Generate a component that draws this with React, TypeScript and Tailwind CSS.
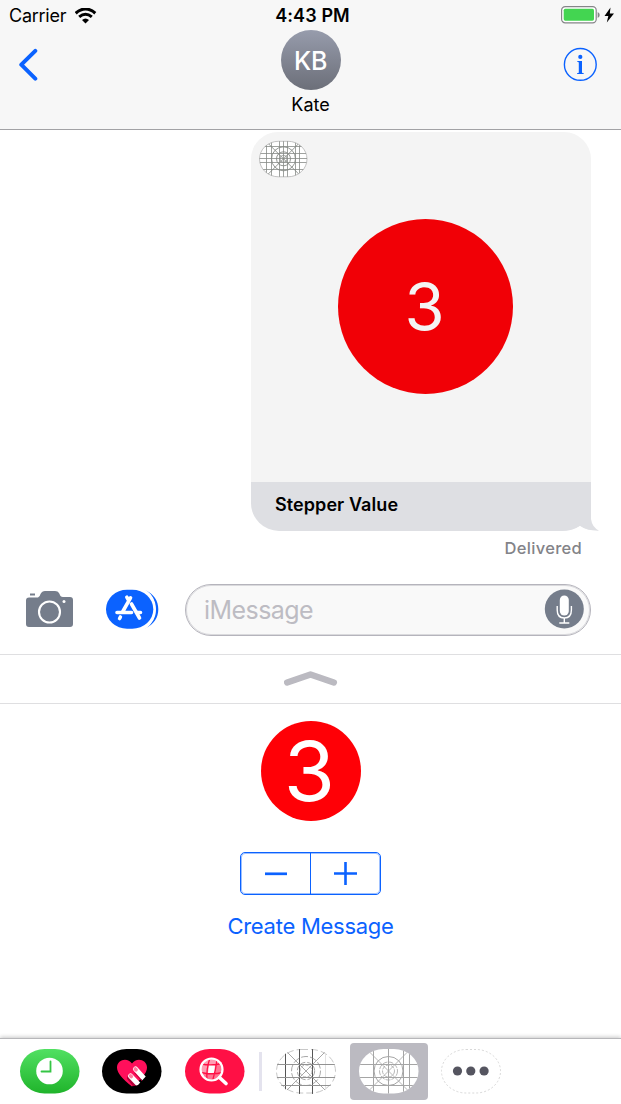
import React from "react";

function StatusBar() {
  return (
    <div className="flex h-[30px] items-center justify-between pt-[2px] pr-[6px] pl-[9px] text-[18px] leading-none">
      <div className="flex w-[241px] items-center gap-[8px]">
        <span className="w-[58px] tracking-[-0.25px] whitespace-nowrap">Carrier</span>
        <svg className="mb-[1px]" width="22" height="16" viewBox="0 0 22 16">
          <path d="M.7 5.200Q10.500-3.200 20.300 5.200" fill="none" stroke="#000" strokeWidth="3.100" />
          <path d="M4.200 8.900Q10.500 3.600 16.800 8.900" fill="none" stroke="#000" strokeWidth="3" />
          <path d="M7 12Q10.500 9 14 12L10.500 15.600Z" />
        </svg>
      </div>
      <span className="font-semibold tracking-[0.1px] whitespace-nowrap">4:43 PM</span>
      <div className="flex w-[240px] items-center justify-end">
        <svg className="mb-[2px]" width="54" height="18" viewBox="0 0 54 18">
          <rect x="0.6" y="0.6" width="34.6" height="16.2" rx="3.6" fill="#fff" stroke="#858588" strokeWidth="1.2" />
          <rect x="2.7" y="2.7" width="30.3" height="12" rx="1.6" fill="#43d551" />
          <path d="M36.7 6v6q2-1 2-3t-2-3" fill="#858588" />
          <path d="M49.5 1.5L43.5 10h3.8L45.8 16.5 53 7.4h-4.2z" />
        </svg>
      </div>
    </div>
  );
}

function Header() {
  return (
    <header className="h-[130px] shrink-0 border-b border-[#a2a2a5] bg-[#f7f7f7]">
      <StatusBar />
      <div className="flex justify-between">
        <button className="mt-[18px] ml-[18px] h-[34px] w-[60px]">
          <svg width="22" height="34" viewBox="0 0 22 34">
            <path d="M17.300 2.800L3.300 16.700 17.300 30.700" fill="none" stroke="#0b62ff" strokeWidth="4" strokeLinecap="round" strokeLinejoin="round" />
          </svg>
        </button>
        <div className="flex flex-col items-center pl-[1px]">
          <div className="flex size-[60px] items-center justify-center rounded-full bg-linear-to-b from-[#979cac] to-[#6c6f79] pt-[3px] text-[25px] font-medium tracking-[-0.4px] text-white">KB</div>
          <span className="mt-[5px] text-[18px] leading-[19px]">Kate</span>
        </div>
        <button className="mt-[17px] mr-[24px] flex h-[34px] w-[55px] justify-end">
          <svg width="34" height="34" viewBox="0 0 34 34">
            <circle cx="17.300" cy="17.400" r="15.900" fill="none" stroke="#0b62ff" strokeWidth="1.400" />
            <circle cx="17.300" cy="9.900" r="2.100" fill="#0b62ff" />
            <path d="M14.200 14h4.800v11.500q0 .5 1.800.8v.7h-6.800v-.7q1.800-.3 1.800-.8v-9.700q0-.8-1.600-1z" fill="#0b62ff" />
          </svg>
        </button>
      </div>
    </header>
  );
}

function BubbleIcon() {
  return (
    <svg width="49" height="38" viewBox="0 -0.8 49 38" fill="none" stroke="#868a86" strokeWidth="0.9">
      <clipPath id="bubbleIconClip"><rect x="0.5" y="0.5" width="47.500" height="35.500" rx="19" ry="17.700" /></clipPath>
      <rect x="0.5" y="0.5" width="47.500" height="35.500" rx="19" ry="17.700" fill="#fff" stroke="#bbb" />
      <g clipPath="url(#bubbleIconClip)">
        <path d="M7.500 0v37M12.500 0v37M20.500 0v37M24.500 0v37M28.500 0v37M36.500 0v37M40.500 0v37M0 5.700h49M0 12.700h49M0 17.700h49M0 21.700h49M0 28.700h49" strokeWidth="0.8" />
        <path d="M6.500 0l36 36M42.500 0l-36 36" />
        <circle cx="24.500" cy="18" r="3.500" strokeWidth="0.7" />
        <circle cx="24.500" cy="18" r="7" />
        <circle cx="24.500" cy="18" r="12" />
      </g>
    </svg>
  );
}

function MessageBubble() {
  return (
    <div className="relative ml-[251px] flex h-[399px] w-[340px] flex-col overflow-visible">
      <div className="h-[350px] rounded-t-[27px] bg-[#f4f4f4] pt-[8px] pl-[8px]">
        <BubbleIcon />
        <div className="mt-[41px] ml-[79px] flex size-[175px] items-center justify-center rounded-full bg-[#f10006] pt-[1px] pr-[2px] text-[65px] font-normal text-[#f4f4f4]">3</div>
      </div>
      <div className="flex h-[49px] items-center rounded-bl-[28px] bg-[#dedfe3] pb-[4px] pl-[24px] text-[18px] font-semibold tracking-[0.08px]">Stepper Value</div>
      <svg className="absolute right-[-10px] bottom-0" width="45" height="20" viewBox="0 0 45 20">
        <path d="M0 20Q15 20 24 14.8 31 19.5 45 20V0H35V20z" fill="#fff" />
        <path d="M0 20V0H35V8Q36 16 43 19.7 31 20 24 14.8 17 20 5 20z" fill="#dedfe3" />
      </svg>
    </div>
  );
}

function ComposeRow() {
  return (
    <div className="flex h-[52px] items-center">
      <svg className="mb-[2px] ml-[26px]" width="48" height="38" viewBox="0 0 48 38">
        <path d="M3 7.500H12Q14 6.500 14.500 4 16 1 19 1h10q3 0 4 2l1.500 3q1 1 2.500 1h7q3 0 3 3v24q0 3-3 3H3q-3 0-3-3V10.500q0-3 3-3z" fill="#757d8b" />
        <path d="M4 4.500h5" stroke="#757d8b" strokeWidth="2" />
        <circle cx="23.500" cy="22" r="10.500" fill="none" stroke="#fff" strokeWidth="2.100" />
        <circle cx="38" cy="11.500" r="1.500" fill="#fff" />
      </svg>
      <svg className="mb-[2px] ml-[32px]" width="53" height="40" viewBox="0 0 53 40">
        <rect x="0" y="0.700" width="47.300" height="39" rx="21" ry="19.500" fill="#0b62ff" />
        <path d="M39 1C48 5 52.300 12 52.300 20.300S48 35.500 39 39.500C46 34.500 49.700 28 49.700 20.300S46 6 39 1z" fill="#0b62ff" />
        <path d="M39.200 1.400C46.500 6.500 49.200 12.500 49.200 20.300S46.500 34 39.200 39" fill="none" stroke="#fff" strokeWidth="1.600" />
        <g fill="none" stroke="#fff" strokeWidth="3.600" strokeLinecap="round">
          <path d="M24.500 8.800L16.500 23M20.800 8.200l1.800 3.200M25.500 15l8 14M11 23.500h14.500M31.500 23.500h3M14.400 28l-.8 1.500" />
        </g>
      </svg>
      <div className="ml-[26px] flex h-[52px] w-[406px] items-center justify-between rounded-full border border-[#b5b4bc] bg-[#f9f9f9] pr-[6px] pl-[18px] outline outline-offset-[-2px] outline-[#bcbbc2]/50">
        <span className="pt-[2px] text-[25px] tracking-[-0.55px] text-[#bdbcc3]">iMessage</span>
        <svg className="mb-[2px]" width="40" height="40" viewBox="0 0 40 40">
          <circle cx="20.300" cy="20" r="19.500" fill="#757d8b" />
          <rect x="15.800" y="6.500" width="9" height="20" rx="4.500" fill="#fff" />
          <path d="M13.200 17v4q0 8 7.100 8t7.100-8V17M20.300 29v5M15.300 34h10" fill="none" stroke="#fff" strokeWidth="1.400" />
        </svg>
      </div>
    </div>
  );
}

function StepperPanel() {
  return (
    <div className="flex h-[334px] flex-col items-center pt-[17px]">
      <div className="flex size-[100px] items-center justify-center rounded-full bg-[#ff0006] pt-[1px] pr-[2px] text-[83px] leading-none font-normal text-white">3</div>
      <div className="mt-[31px] flex h-[43px] w-[141px] rounded-[5px] border border-[#0b62ff] outline outline-offset-[-2px] outline-[#0b62ff]/40">
        <button className="flex flex-1 items-center justify-center border-r border-[#0b62ff]">
          <svg width="24" height="24" viewBox="0 0 24 24"><path d="M1 11.800h22" stroke="#0b62ff" strokeWidth="2.700" /></svg>
        </button>
        <button className="flex flex-1 items-center justify-center">
          <svg width="24" height="24" viewBox="0 0 24 24"><path d="M0 11.500h23M11.500 0v23" stroke="#0b62ff" strokeWidth="2.600" /></svg>
        </button>
      </div>
      <button className="mt-[18px] text-[22px] leading-[26px] tracking-[-0.27px] whitespace-nowrap text-[#0b62ff]">Create Message</button>
    </div>
  );
}

function RecentIcon() {
  return (
    <svg width="60" height="45" viewBox="0 0 60 45">
      <defs><linearGradient id="recentGreen" x1="0" y1="0" x2="0" y2="1"><stop stopColor="#51e062" /><stop offset="1" stopColor="#20b42b" /></linearGradient></defs>
      <rect width="59.500" height="44.500" rx="24.500" ry="22.250" fill="url(#recentGreen)" />
      <circle cx="29.500" cy="22" r="13.300" fill="#fff" />
      <path d="M30.500 12.500v10H21.500" fill="none" stroke="#35c545" strokeWidth="1.800" strokeLinecap="round" />
    </svg>
  );
}

function DigitalTouchIcon() {
  return (
    <svg width="60" height="45" viewBox="0 0 60 45">
      <clipPath id="heartClip"><path d="M30 37.500L15 22V6H46V25L36 36z" /></clipPath>
      <rect width="59.500" height="44.500" rx="24.500" ry="22.250" />
      <path d="M30 37.500Q15 26 15 18.500C15 10 26 8 30 14.500 34 8 45 10 45 18.500Q45 26 30 37.500z" fill="#ff0f5b" />
      <g clipPath="url(#heartClip)">
        <path d="M27.500 29l6 7" stroke="#b30037" strokeWidth="5" strokeLinecap="round" />
        <path d="M33.500 20L43 30.500M28.500 27L37 36" stroke="#fff" strokeWidth="5" strokeLinecap="round" />
        <path d="M32.500 23.800L40 32" stroke="#b30037" strokeWidth="1" />
        <path d="M33.300 20l.8.8M28.500 26.800l.8.8" stroke="#ff7d9f" strokeWidth="3.600" strokeLinecap="round" />
      </g>
    </svg>
  );
}

function ImagesIcon() {
  return (
    <svg width="60" height="45" viewBox="0 0 60 45">
      <rect width="59.500" height="44.500" rx="24.500" ry="22.250" fill="#ff1045" />
      <circle cx="26.500" cy="20.500" r="11" fill="#ff9db3" />
      <path d="M16 25h21q-3 7-10.500 7T16 25M31 15l6-2v12l-7-1z" fill="#ff7492" />
      <path d="M24 16h6l-1 8h-6z" fill="#fff" />
      <path d="M25 9Q21 20 22 32M32 10Q31 21 27.500 32M16 15Q27 17 37 14.500M16 23.500Q27 26 37.500 23.500" fill="none" stroke="#ff1045" strokeWidth="1.300" />
      <circle cx="26.500" cy="20.500" r="11" fill="none" stroke="#fff" strokeWidth="2.200" />
      <path d="M34.500 28.500l6.500 6" stroke="#fff" strokeWidth="3.600" strokeLinecap="round" />
    </svg>
  );
}

function GridIconA() {
  return (
    <svg width="60" height="45" viewBox="0 0 60 45" fill="none" stroke="#929292">
      <clipPath id="gridClipA"><rect width="60" height="45" rx="24.500" ry="22" /></clipPath>
      <rect x=".5" y=".5" width="59" height="43.500" rx="24.500" ry="21.700" fill="#fff" stroke="#c8c8c8" strokeDasharray="7 3" />
      <g clipPath="url(#gridClipA)">
        <path d="M9.500 0v45M23.500 0v45M36.500 0v45" stroke="#555" />
        <path d="M49.500 0v45" stroke="#e2e2e2" />
        <path d="M0 15.500h60M0 28.500h60M0 36.500h60" />
        <path d="M8 0l44 44M52 0L8 44" strokeWidth="0.8" />
        <circle cx="30" cy="22" r="6" strokeWidth="0.7" strokeDasharray="3 1.500" /><circle cx="30" cy="22" r="8.700" strokeWidth="0.8" strokeDasharray="5 2" />
        <circle cx="30" cy="22" r="14.500" strokeWidth="0.8" strokeDasharray="7 2" />
      </g>
    </svg>
  );
}

function GridIconB() {
  return (
    <svg width="60" height="45" viewBox="0 0 60 45" fill="none" stroke="#a5a5a5">
      <clipPath id="gridClipB"><rect width="59.500" height="44.500" rx="24.500" ry="22" /></clipPath>
      <rect width="59.500" height="44.500" rx="24.500" ry="22" fill="#fff" stroke="none" />
      <g clipPath="url(#gridClipB)">
        <path d="M14.500 0v45M29.500 0v45M44.500 0v45M50.500 0v45M0 15.500h60M0 28.500h60M0 36.500h60" />
        <path d="M7.500 0l44 44M51.500 0l-44 44" strokeWidth="0.8" />
        <circle cx="29.500" cy="22" r="6" strokeWidth="0.8" strokeDasharray="4 1" /><circle cx="29.500" cy="22" r="9" strokeWidth="0.8" strokeDasharray="5 1" />
        <circle cx="29.500" cy="22" r="14.500" />
      </g>
    </svg>
  );
}

function AppDrawer() {
  return (
    <div className="flex h-[66px] border-t border-[#b7b7ba] bg-white shadow-[0_-1px_4px_rgba(0,0,0,0.22)]">
      <div className="flex w-[259px] gap-[22.4px] pt-[10px] pl-[20px]"><RecentIcon /><DigitalTouchIcon /><ImagesIcon /></div>
      <div className="mt-[13px] h-[39px] w-[3px] bg-[#e4e3ee]" />
      <div className="mt-[10px] ml-[14px]"><GridIconA /></div>
      <div className="mt-[4px] ml-[14px] flex h-[57px] w-[78px] items-start justify-center rounded-[4px] bg-[#bbbac1] pt-[6px]"><GridIconB /></div>
      <svg className="mt-[10px] ml-[13px]" width="60" height="45" viewBox="0 0 60 45">
        <rect x=".5" y=".5" width="59" height="43.500" rx="24.500" ry="21.700" fill="none" stroke="#d8d8d8" strokeDasharray="2 2" />
        <g fill="#555560"><circle cx="16.500" cy="22" r="4.600" /><circle cx="29.800" cy="22" r="4.600" /><circle cx="43.100" cy="22" r="4.600" /></g>
      </svg>
    </div>
  );
}

export default function App() {
  return (
    <main className="flex h-[1104px] w-[621px] flex-col overflow-hidden bg-white font-['Inter','Liberation_Sans',sans-serif] text-black">
      <Header />
      <section className="flex h-[454px] flex-col pt-[2px]">
        <MessageBubble />
        <span className="mt-[7px] mr-[39px] self-end text-[16.5px] leading-[20px] font-medium tracking-[0.3px] text-[#838388]">Delivered</span>
      </section>
      <ComposeRow />
      <div className="mt-[18px] flex h-[50px] justify-center border-y border-[#dfdfe1] pt-[15px]">
        <svg width="54" height="18" viewBox="0 0 54 18"><path d="M3.200 12.500L26.500 4.500 49.800 12.500" fill="none" stroke="#bbbac1" strokeWidth="6.500" strokeLinecap="round" strokeLinejoin="round" /></svg>
      </div>
      <StepperPanel />
      <AppDrawer />
    </main>
  );
}
